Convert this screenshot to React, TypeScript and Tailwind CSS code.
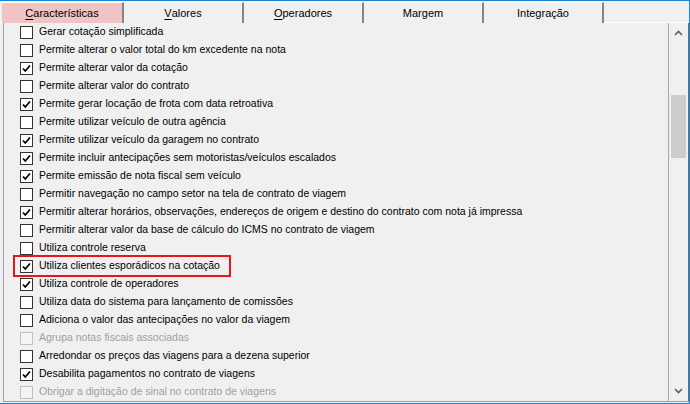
import React from "react";

type Item = { label: string; checked?: boolean; disabled?: boolean };

const items: Item[] = [
  { label: "Gerar cotação simplificada" },
  { label: "Permite alterar o valor total do km excedente na nota" },
  { label: "Permite alterar valor da cotação", checked: true },
  { label: "Permite alterar valor do contrato" },
  { label: "Permite gerar locação de frota com data retroativa", checked: true },
  { label: "Permite utilizar veículo de outra agência" },
  { label: "Permite utilizar veículo da garagem no contrato", checked: true },
  { label: "Permite incluir antecipações sem motoristas/veículos escalados", checked: true },
  { label: "Permite emissão de nota fiscal sem veículo", checked: true },
  { label: "Permitir navegação no campo setor na tela de contrato de viagem" },
  {
    label:
      "Permitir alterar horários, observações, endereços de origem e destino do contrato com nota já impressa",
    checked: true,
  },
  { label: "Permitir alterar valor da base de cálculo do ICMS no contrato de viagem" },
  { label: "Utiliza controle reserva" },
  { label: "Utiliza clientes esporádicos na cotação", checked: true },
  { label: "Utiliza controle de operadores", checked: true },
  { label: "Utiliza data do sistema para lançamento de comissões" },
  { label: "Adiciona o valor das antecipações no valor da viagem" },
  { label: "Agrupa notas fiscais associadas", disabled: true },
  { label: "Arredondar os preços das viagens para a dezena superior" },
  { label: "Desabilita pagamentos no contrato de viagens", checked: true },
  { label: "Obrigar a digitação de sinal no contrato de viagens", disabled: true },
];

const tabs = [
  { first: "C", rest: "aracterísticas", active: true },
  { first: "V", rest: "alores" },
  { first: "O", rest: "peradores" },
  { first: "", rest: "Margem" },
  { first: "", rest: "Integração" },
];

const CheckBox = ({ checked, disabled }: { checked?: boolean; disabled?: boolean }) => (
  <div
    className={`w-[13px] h-[13px] shrink-0 border flex items-center justify-center ${
      disabled ? "border-[#c0c0c0] bg-[#f4f4f4]" : "border-[#333333] bg-white"
    }`}
  >
    {checked && (
      <svg width="9" height="9" viewBox="0 0 9 9">
        <path d="M1 4.5 L3.3 7 L8 1.5" fill="none" stroke="#000" strokeWidth="1.8" />
      </svg>
    )}
  </div>
);

export default function App() {
  return (
    <div
      className="w-[690px] h-[404px] bg-[#f0f0f0] border-t border-r border-b border-[#1a85d8] flex flex-col text-[10.5px] text-black overflow-hidden"
      style={{ fontFamily: '"Liberation Sans", Arial, sans-serif' }}
    >
      {/* tabs */}
      <div className="h-[22px] flex pl-[2px] pt-[1px] border-b border-white text-[11px]">
        {tabs.map((t, i) => (
          <div
            key={i}
            className={`h-[21px] flex items-center justify-center border-t border-white border-r-2 border-r-[#858585] ${
              t.active ? "w-[122px] bg-[#f0c4c4]" : "w-[120px] bg-[#f0f0f0]"
            }`}
          >
            {t.first && <span className="underline underline-offset-2">{t.first}</span>}
            <span>{t.rest}</span>
          </div>
        ))}
      </div>

      {/* panel */}
      <div className="flex-1 flex ml-[3px] mb-[2px] border-l border-b border-[#a0a0a0] border-r border-r-[#6d6d6d]">
        <div className="relative flex-1 flex flex-col">
          {items.map((it, i) => (
            <div key={i} className="h-[18px] flex items-center pl-[16px] shrink-0">
              <CheckBox checked={it.checked} disabled={it.disabled} />
              <span className={`ml-[6px] whitespace-nowrap ${it.disabled ? "text-[#a0a0a0]" : ""}`}>
                {it.label}
              </span>
            </div>
          ))}
          <div className="absolute left-[9px] top-[232px] w-[218px] h-[22px] border-2 border-[#e3171c]" />
        </div>

        {/* scrollbar */}
        <div className="w-[20px] border-l border-[#a8a8a8] flex flex-col items-center">
          <div className="h-[18px] flex items-center justify-center mt-[1px]">
            <svg width="9" height="6" viewBox="0 0 9 6">
              <path d="M1 5 L4.5 1.5 L8 5" fill="none" stroke="#606060" strokeWidth="1.6" />
            </svg>
          </div>
          <div className="w-[15px] h-[63px] bg-[#cdcdcd] mt-[53px]" />
          <div className="flex-1" />
          <div className="h-[18px] flex items-center justify-center mb-[1px]">
            <svg width="9" height="6" viewBox="0 0 9 6">
              <path d="M1 1 L4.5 4.5 L8 1" fill="none" stroke="#606060" strokeWidth="1.6" />
            </svg>
          </div>
        </div>
      </div>
    </div>
  );
}
